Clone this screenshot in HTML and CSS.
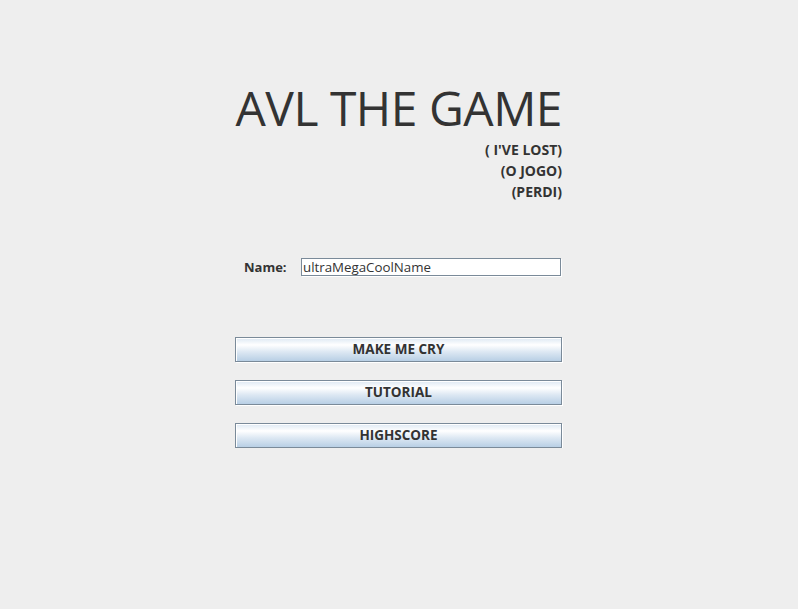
FILE: index.html
```html
<!DOCTYPE html>
<html lang="pt">
<head>
<meta charset="utf-8">
<title>AVL THE GAME</title>
<link rel="stylesheet" href="styles.css">
</head>
<body>
<main class="menu">
  <h1 class="title">AVL THE GAME</h1>
  <div class="subtitles">
    <p>( I'VE LOST)</p>
    <p>(O JOGO)</p>
    <p>(PERDI)</p>
  </div>
  <div class="name-row">
    <label class="name-label" for="name">Name:</label>
    <input class="name-input" id="name" type="text" value="ultraMegaCoolName">
  </div>
  <div class="buttons">
    <button class="btn">MAKE ME CRY</button>
    <button class="btn">TUTORIAL</button>
    <button class="btn">HIGHSCORE</button>
  </div>
</main>
</body>
</html>
```

FILE: styles.css
```css
html, body {
  margin: 0;
  padding: 0;
  background: #eeeeee;
}

body {
  font-family: "Open Sans", "DejaVu Sans", sans-serif;
  color: #333333;
}

.menu {
  width: 328px;
  margin: 0 auto;
  padding-top: 83px;
  display: flex;
  flex-direction: column;
}

.title {
  margin: 0 1px 0 0;
  font-size: 48px;
  font-weight: 400;
  letter-spacing: -0.5px;
  line-height: 50px;
  text-align: right;
  white-space: nowrap;
}

.subtitles {
  margin: 6px 1px 0 0;
  text-align: right;
}

.subtitles p {
  margin: 0;
  font-size: 14px;
  font-weight: 700;
  line-height: 21px;
}

.name-row {
  display: flex;
  align-items: center;
  margin-top: 56px;
}

.name-label {
  width: 57px;
  padding-left: 9px;
  font-size: 13px;
  font-weight: 700;
}

.name-input {
  flex: 1;
  height: 18px;
  box-sizing: border-box;
  margin: 0 2px 0 0;
  padding: 0 1px;
  border: 1px solid #7a8a99;
  background: #ffffff;
  box-shadow: 1px 1px 0 #ffffff;
  font-family: "Open Sans", "DejaVu Sans", sans-serif;
  font-size: 13.3px;
  color: #333333;
  outline: none;
}

.buttons {
  display: flex;
  flex-direction: column;
  gap: 18px;
  margin-top: 61px;
}

.btn {
  height: 25px;
  width: 327px;
  box-sizing: border-box;
  margin: 0;
  padding: 0 0 2px;
  border: 1px solid #7a8a99;
  box-shadow: inset 1px 1px 0 #ffffff, 1px 1px 0 #ffffff;
  background: linear-gradient(to bottom, #dde8f3 0%, #ffffff 30%, #dde8f3 60%, #b8cfe5 100%);
  font-family: "Open Sans", "DejaVu Sans", sans-serif;
  font-size: 13.5px;
  font-weight: 700;
  color: #333333;
  cursor: pointer;
}
```
